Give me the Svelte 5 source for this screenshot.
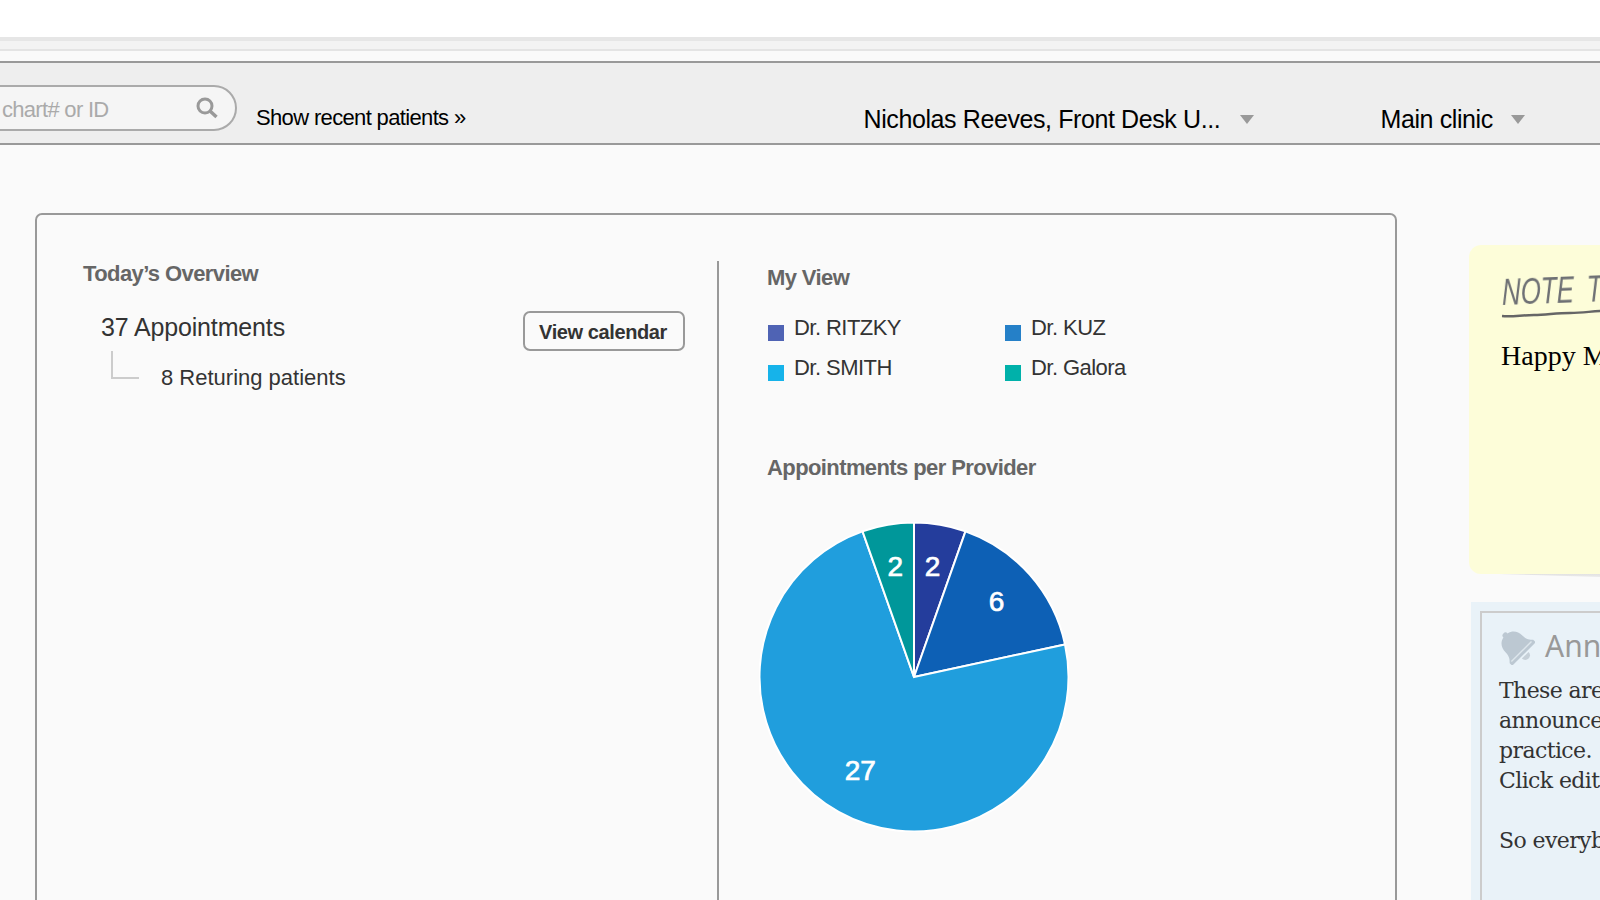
<script>
	const providers = [
		{ name: 'Dr. RITZKY', swatch: '#4f63b4' },
		{ name: 'Dr. KUZ', swatch: '#2580c8' },
		{ name: 'Dr. SMITH', swatch: '#16b3ea' },
		{ name: 'Dr. Galora', swatch: '#00b1aa' }
	];

	const slices = [
		{ value: 2, color: '#243d9c' },
		{ value: 6, color: '#0d60b5' },
		{ value: 27, color: '#209edd' },
		{ value: 2, color: '#00979a' }
	];

	const cx = 155;
	const cy = 155;
	const r = 154.5;
	const total = slices.reduce((sum, s) => sum + s.value, 0);

	function point(angle, radius) {
		return [cx + radius * Math.sin(angle), cy - radius * Math.cos(angle)];
	}

	let start = 0;
	const pie = slices.map((s) => {
		const sweep = (s.value / total) * Math.PI * 2;
		const end = start + sweep;
		const [x1, y1] = point(start, r);
		const [x2, y2] = point(end, r);
		const [lx, ly] = point(start + sweep / 2, 110);
		const large = sweep > Math.PI ? 1 : 0;
		const d = `M${cx} ${cy}L${x1} ${y1}A${r} ${r} 0 ${large} 1 ${x2} ${y2}Z`;
		start = end;
		return { ...s, d, lx, ly };
	});
</script>

<div class="page">
	<div class="top"></div>
	<div class="strip-a"></div>
	<div class="strip-b"></div>

	<header class="toolbar">
		<div class="search">
			<span class="placeholder">chart# or ID</span>
			<svg class="search-icon" viewBox="0 0 22 22" width="22" height="22">
				<circle cx="9" cy="9" r="7" fill="none" stroke="#999" stroke-width="3" />
				<path d="M14 14l6.500 6" stroke="#999" stroke-width="3.500" fill="none" />
			</svg>
		</div>
		<a class="recent" href="#recent">Show recent patients »</a>
		<div class="select user">Nicholas Reeves, Front Desk U...<span class="caret"></span></div>
		<div class="select clinic">Main clinic<span class="caret"></span></div>
	</header>

	<main class="content">
		<section class="card">
			<div class="overview">
				<h2>Today’s Overview</h2>
				<div class="summary">
					<div>
						<div class="count">37 Appointments</div>
						<div class="sub">
							<span class="elbow"></span>
							<span>8 Returing patients</span>
						</div>
					</div>
					<button>View calendar</button>
				</div>
			</div>
			<div class="myview">
				<h2>My View</h2>
				<ul class="legend">
					{#each providers as p}
						<li><span class="swatch" style="background: {p.swatch}"></span>{p.name}</li>
					{/each}
				</ul>
				<h2 class="chart-title">Appointments per Provider</h2>
				<svg class="pie" width="310" height="310" viewBox="0 0 310 310">
					{#each pie as s}
						<path d={s.d} fill={s.color} stroke="#fff" stroke-width="2" />
					{/each}
					{#each pie as s}
						<text x={s.lx} y={s.ly} dy="7">{s.value}</text>
					{/each}
				</svg>
			</div>
		</section>

		<aside class="side">
			<div class="note">
				<div class="note-title">NOTE TO</div>
				<svg class="note-rule" viewBox="0 0 100 10" width="100" height="10">
					<path d="M0 7c10 1 20-1 32-1s22-2 36-2 22-2 32-2" fill="none" stroke="#666" stroke-width="2.500" />
				</svg>
				<p>Happy Monday</p>
			</div>
			<div class="announce">
				<div class="announce-inner">
					<div class="announce-head">
						<svg class="bell" viewBox="0 0 32 32" width="38" height="38">
							<g transform="rotate(-45 16 16)">
								<path d="M16 1a2.500 2.500 0 0 1 2.500 2.500c5 1 7.500 5 7.500 10 0 5 2 7 4 9v3H2v-3c2-2 4-4 4-9 0-5 2.500-9 7.500-10A2.500 2.500 0 0 1 16 1z" fill="#bcc8d2" />
								<path d="M4 22.500h24" stroke="#dde6ec" stroke-width="1.200" />
								<path d="M12 27h8a4 4 0 0 1-8 0z" fill="#c6d0d8" />
							</g>
						</svg>
						<span>Announcements</span>
					</div>
					<div class="announce-body">
						<div>These are</div>
						<div>announcements</div>
						<div>practice.</div>
						<div>Click edit</div>
						<div class="gap">So everybody</div>
					</div>
				</div>
			</div>
		</aside>
	</main>
</div>

<style>
	:global(body) {
		margin: 0;
	}

	.page {
		width: 1600px;
		height: 900px;
		overflow: hidden;
		background: #fafafa;
		font-family: 'Liberation Sans', Arial, sans-serif;
	}

	.top {
		height: 37px;
		background: #fff;
	}

	.strip-a {
		height: 12px;
		background: #f3f3f3;
		border-top: 4px solid #e6e6e6;
		box-sizing: border-box;
	}

	.strip-b {
		height: 12px;
		background: #fafafa;
		border-top: 2px solid #e4e4e4;
		box-sizing: border-box;
	}

	.toolbar {
		height: 84px;
		box-sizing: border-box;
		background: #eee;
		border-top: 2px solid #999;
		border-bottom: 2px solid #999;
		display: flex;
		align-items: flex-start;
	}

	.search {
		width: 261px;
		height: 46px;
		margin: 22px 0 0 -24px;
		box-sizing: border-box;
		background: #f5f5f5;
		border: 2px solid #aaa;
		border-radius: 23px;
		display: flex;
		align-items: center;
		padding-left: 24px;
		flex: none;
	}

	.placeholder {
		font-size: 22px;
		color: #aaa;
		letter-spacing: -0.7px;
		margin-top: 4px;
		flex: 1;
	}

	.search-icon {
		margin-right: 17px;
	}

	.recent {
		margin: 42px 0 0 19px;
		font-size: 22px;
		line-height: 26px;
		color: #000;
		text-decoration: none;
		letter-spacing: -0.65px;
		white-space: nowrap;
	}

	.select {
		font-size: 25px;
		line-height: 30px;
		color: #000;
		margin-top: 41px;
		display: flex;
		align-items: center;
		white-space: nowrap;
		letter-spacing: -0.4px;
	}

	.user {
		margin-left: 398px;
		width: 420px;
		flex: none;
	}

	.clinic {
		margin-left: 97px;
	}

	.clinic .caret {
		margin-left: 18px;
	}

	.caret {
		width: 0;
		height: 0;
		border-left: 7.500px solid transparent;
		border-right: 7.500px solid transparent;
		border-top: 9px solid #999;
		margin-left: 20px;
	}

	.content {
		display: flex;
		align-items: flex-start;
		padding: 68px 0 0 35px;
	}

	.card {
		width: 1362px;
		height: 800px;
		flex: none;
		box-sizing: border-box;
		border: 2px solid #999;
		border-radius: 7px;
		padding: 45px 0 0 46px;
		display: flex;
		align-items: flex-start;
	}

	h2 {
		margin: 0;
		font-size: 22px;
		line-height: 28px;
		font-weight: 700;
		color: #666;
		letter-spacing: -0.6px;
	}

	.overview {
		width: 602px;
		flex: none;
	}

	.summary {
		display: flex;
		justify-content: space-between;
		align-items: flex-start;
		margin-top: 24px;
		padding-left: 18px;
	}

	.count {
		font-size: 25px;
		line-height: 30px;
		color: #333;
		letter-spacing: -0.15px;
	}

	.sub {
		position: relative;
		margin-top: 23px;
		padding-left: 60px;
		font-size: 22px;
		line-height: 26px;
		color: #333;
	}

	.elbow {
		position: absolute;
		left: 10px;
		top: -14px;
		width: 26px;
		height: 26px;
		border-left: 2px solid #ccc;
		border-bottom: 2px solid #ccc;
	}

	button {
		margin-top: -1px;
		width: 162px;
		height: 40px;
		box-sizing: border-box;
		border: 2px solid #999;
		border-radius: 7px;
		background: #fafafa;
		font-family: inherit;
		font-size: 20px;
		font-weight: 700;
		color: #333;
		letter-spacing: -0.4px;
		padding: 2px 2px 0 0;
	}

	.myview {
		height: 800px;
		border-left: 2px solid #999;
		padding-left: 48px;
		margin: 1px 0 0 32px;
		flex: 1;
	}

	.myview > h2:first-child {
		margin-top: 3px;
	}

	.legend {
		list-style: none;
		margin: 21px 0 0;
		padding: 0;
		display: grid;
		grid-template-columns: 237px 200px;
		grid-auto-rows: 40px;
	}

	.legend li {
		font-size: 22px;
		line-height: 30px;
		color: #333;
		display: flex;
		align-items: flex-start;
		white-space: nowrap;
		letter-spacing: -0.55px;
	}

	.swatch {
		width: 16px;
		height: 16px;
		margin: 12px 10px 0 1px;
		flex: none;
	}

	.chart-title {
		margin-top: 61px;
	}

	.pie {
		display: block;
		margin: 40px 0 0 -8.5px;
	}

	.pie text {
		fill: #fff;
		stroke: #fff;
		stroke-width: 0.7px;
		font-size: 28px;
		text-anchor: middle;
	}

	.side {
		margin-left: 72px;
		width: 300px;
		flex: none;
	}

	.note {
		position: relative;
		height: 329px;
		margin-top: 32px;
		background: #fdfdd9;
		border-radius: 12px 0 0 12px;
		padding: 30px 0 0 33px;
		box-sizing: border-box;
	}

	.note::after {
		content: '';
		position: absolute;
		left: 30px;
		right: 0;
		bottom: -8px;
		height: 8px;
		background: linear-gradient(#e2e2e2, #fafafa);
		clip-path: polygon(0 0, 100% 0, 100% 100%);
	}

	.note-title {
		font-style: italic;
		font-size: 37px;
		line-height: 36px;
		color: #6e7074;
		white-space: nowrap;
		word-spacing: 8px;
		transform: scaleX(0.7) rotate(-1.5deg);
		transform-origin: left center;
		filter: blur(0.4px);
	}

	.note-rule {
		display: block;
		margin-top: -2px;
		overflow: visible;
	}

	.note p {
		margin: 21px 0 0 -1px;
		font-family: 'Liberation Serif', serif;
		font-size: 28px;
		line-height: 32px;
		color: #000;
		white-space: nowrap;
	}

	.announce {
		margin-top: 28px;
		margin-left: 2px;
		background: #e9f2f8;
		padding: 9px 0 0 9px;
		height: 400px;
	}

	.announce-inner {
		height: 100%;
		border-top: 2px solid #ccc;
		border-left: 2px solid #ccc;
		padding: 15px 0 0 18px;
		box-sizing: border-box;
	}

	.announce-head {
		display: flex;
		align-items: center;
		gap: 10px;
		height: 36px;
		font-family: 'Noto Sans', sans-serif;
		font-size: 30px;
		line-height: 36px;
		color: #999;
		white-space: nowrap;
	}

	.bell {
		flex: none;
		margin-left: -3px;
		filter: blur(0.5px);
	}

	.announce-body {
		margin-top: 12px;
		margin-left: -1px;
		font-family: 'DejaVu Serif', serif;
		font-size: 22px;
		line-height: 30px;
		color: #333;
		white-space: nowrap;
		letter-spacing: -0.6px;
	}

	.gap {
		margin-top: 30px;
	}
</style>
